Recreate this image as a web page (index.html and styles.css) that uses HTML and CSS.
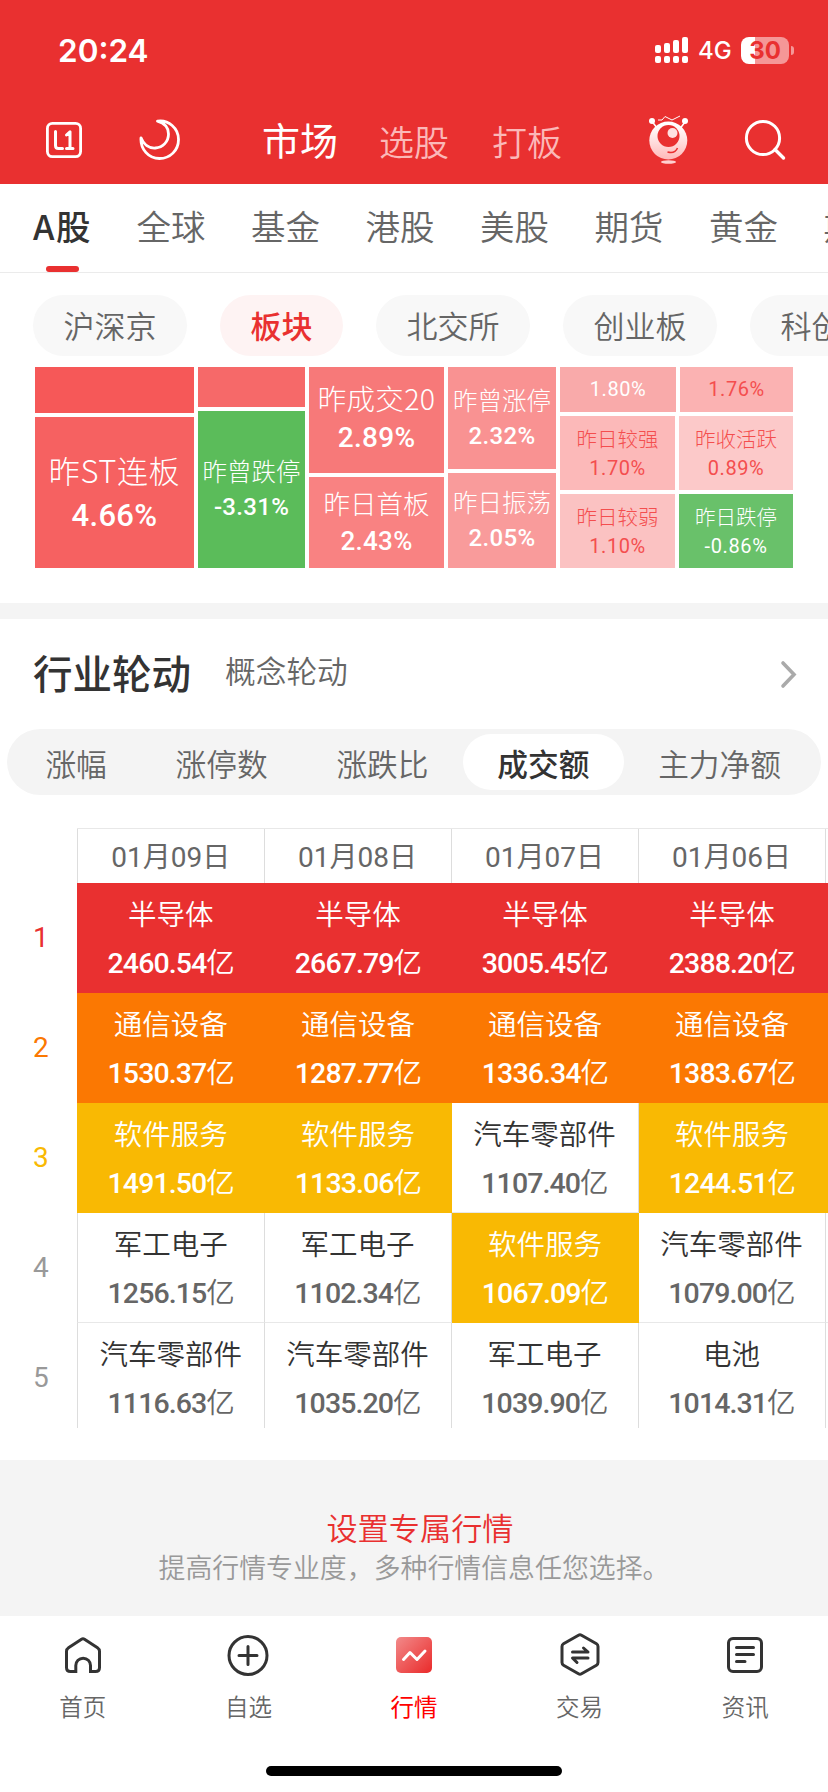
FILE: index.html
```html
<!DOCTYPE html>
<html lang="zh-CN">
<head>
    <meta charset="UTF-8">
    <meta name="viewport" content="width=device-width, initial-scale=1.0">
    <title>行情</title>
    <link rel="stylesheet" href="styles.css">
</head>
<body>
    <header class="top">
        <div class="status">
            <span class="time">20:24</span>
            <svg class="signal" width="34" height="28" viewBox="0 0 34 28" fill="#fff">
                <rect x="0" y="9" width="6" height="8" rx="2"/>
                <rect x="9" y="7" width="6" height="10" rx="2"/>
                <rect x="18" y="4" width="6" height="13" rx="2"/>
                <rect x="27" y="1" width="6" height="16" rx="2"/>
                <rect x="0" y="20" width="6" height="7" rx="2"/>
                <rect x="9" y="20" width="6" height="7" rx="2"/>
                <rect x="18" y="20" width="6" height="7" rx="2"/>
                <rect x="27" y="20" width="6" height="7" rx="2"/>
            </svg>
            <span class="network">4G</span>
            <div class="battery">30</div>
            <div class="battery-tip"></div>
        </div>
        <nav class="nav">
            <svg class="icon-l1" width="36" height="36" viewBox="0 0 36 36" fill="none" stroke="#fff" stroke-width="2.8" stroke-linecap="round" stroke-linejoin="round">
                <rect x="1.4" y="1.4" width="33.2" height="33.2" rx="5"/>
                <path d="M9.5 9.5V23.5Q9.5 26.5 12.5 26.5H16.5M20.5 13L24 9.8V26.5M20.5 26.5H27" stroke-width="3"/>
            </svg>
            <svg class="icon-moon" width="42" height="42" viewBox="0 0 42 42" fill="none" stroke="#fff" stroke-width="2.8" stroke-linejoin="round">
                <path d="M18.5 2.2C29.5 0.6 39.5 9 39.5 20.5C39.5 31.5 31 39.5 20.5 39.5C9.5 39.5 1.2 30 2 18.8C4.500 25.500 10 29.500 16.500 29C24 28.400 29.500 22.500 29.500 15C29.500 9 25.500 4.200 18.500 2.200Z"/>
            </svg>
            <a class="nav-item active">市场</a>
            <a class="nav-item">选股</a>
            <a class="nav-item last">打板</a>
            <svg class="icon-robot" width="42" height="50" viewBox="0 0 42 50">
                <defs>
                    <linearGradient id="robot" x1="0" y1="0" x2="0" y2="1">
                        <stop offset="0.1" stop-color="#fff"/>
                        <stop offset="1" stop-color="#ffb9b9"/>
                    </linearGradient>
                </defs>
                <path d="M4.500 7L9 13M37 7L32.500 13" stroke="#fff" stroke-width="1.500"/>
                <circle cx="4" cy="6" r="3" fill="#fff"/>
                <circle cx="37" cy="6" r="3" fill="#fff"/>
                <path d="M10 5H14L17 1.500L24 5L32 1" fill="none" stroke="#fff" stroke-width="1"/>
                <circle cx="20.300" cy="25.500" r="19" fill="url(#robot)"/>
                <circle cx="20.500" cy="21" r="11" fill="#e93030"/>
                <circle cx="24.500" cy="18" r="5" fill="#ffe0e0"/>
                <path d="M19.500 37Q27 39 29.500 33" fill="none" stroke="#e93030" stroke-width="1.500"/>
                <ellipse cx="20.500" cy="47" rx="7.500" ry="1.700" fill="#ffd0d0"/>
            </svg>
            <svg class="icon-search" width="42" height="42" viewBox="0 0 42 42" fill="none" stroke="#fff" stroke-width="3">
                <circle cx="19" cy="19" r="16.600"/>
                <path d="M31 30.500L39.500 39" stroke-width="3.400" stroke-linecap="round"/>
            </svg>
        </nav>
    </header>

    <nav class="tabs">
        <a class="tab active">A股</a>
        <a class="tab">全球</a>
        <a class="tab">基金</a>
        <a class="tab">港股</a>
        <a class="tab">美股</a>
        <a class="tab">期货</a>
        <a class="tab">黄金</a>
        <a class="tab">期权</a>
    </nav>

    <div class="chips">
        <a class="chip">沪深京</a>
        <a class="chip active">板块</a>
        <a class="chip">北交所</a>
        <a class="chip">创业板</a>
        <a class="chip">科创板</a>
    </div>

    <section class="treemap">
        <div class="col col-1">
            <div class="cell c1"></div>
            <div class="cell c2 xl"><span>昨ST连板</span><b>4.66%</b></div>
        </div>
        <div class="col col-2">
            <div class="cell c3"></div>
            <div class="cell c4 md"><span>昨曾跌停</span><b>-3.31%</b></div>
        </div>
        <div class="col col-3">
            <div class="cell c5 lg"><span>昨成交20</span><b>2.89%</b></div>
            <div class="cell c6 ml"><span>昨日首板</span><b>2.43%</b></div>
        </div>
        <div class="col col-4">
            <div class="cell c7 md"><span>昨曾涨停</span><b>2.32%</b></div>
            <div class="cell c8 md"><span>昨日振荡</span><b>2.05%</b></div>
        </div>
        <div class="col col-5">
            <div class="pair pair-top">
                <div class="cell c9 sm"><b>1.80%</b></div>
                <div class="cell c10 sm"><b>1.76%</b></div>
            </div>
            <div class="pair pair-mid">
                <div class="cell c11 sm"><span>昨日较强</span><b>1.70%</b></div>
                <div class="cell c12 sm"><span>昨收活跃</span><b>0.89%</b></div>
            </div>
            <div class="pair pair-low">
                <div class="cell c13 sm"><span>昨日较弱</span><b>1.10%</b></div>
                <div class="cell c14 sm"><span>昨日跌停</span><b>-0.86%</b></div>
            </div>
        </div>
    </section>

    <section class="rotation">
        <div class="heading">
            <h2>行业轮动</h2>
            <a class="sub">概念轮动</a>
            <svg width="18" height="30" viewBox="0 0 18 30" fill="none" stroke="#aaa" stroke-width="3.600" stroke-linecap="round">
                <path d="M4 4L15 15.500L4 27"/>
            </svg>
        </div>
        <div class="segment">
            <a>涨幅</a>
            <a>涨停数</a>
            <a>涨跌比</a>
            <a class="active">成交额</a>
            <a>主力净额</a>
        </div>
        <div class="board">
            <div class="ranks">
                <span class="r1">1</span>
                <span class="r2">2</span>
                <span class="r3">3</span>
                <span>4</span>
                <span>5</span>
            </div>
            <div class="grid">
                <div class="date">01<i>月</i>09<i>日</i></div>
                <div class="date">01<i>月</i>08<i>日</i></div>
                <div class="date">01<i>月</i>07<i>日</i></div>
                <div class="date">01<i>月</i>06<i>日</i></div>
                <div class="date"></div>

                <div class="item red"><span>半导体</span><b>2460.54<i>亿</i></b></div>
                <div class="item red"><span>半导体</span><b>2667.79<i>亿</i></b></div>
                <div class="item red"><span>半导体</span><b>3005.45<i>亿</i></b></div>
                <div class="item red"><span>半导体</span><b>2388.20<i>亿</i></b></div>
                <div class="item red"></div>

                <div class="item orange"><span>通信设备</span><b>1530.37<i>亿</i></b></div>
                <div class="item orange"><span>通信设备</span><b>1287.77<i>亿</i></b></div>
                <div class="item orange"><span>通信设备</span><b>1336.34<i>亿</i></b></div>
                <div class="item orange"><span>通信设备</span><b>1383.67<i>亿</i></b></div>
                <div class="item orange"></div>

                <div class="item yellow"><span>软件服务</span><b>1491.50<i>亿</i></b></div>
                <div class="item yellow"><span>软件服务</span><b>1133.06<i>亿</i></b></div>
                <div class="item"><span>汽车零部件</span><b>1107.40<i>亿</i></b></div>
                <div class="item yellow"><span>软件服务</span><b>1244.51<i>亿</i></b></div>
                <div class="item yellow"></div>

                <div class="item"><span>军工电子</span><b>1256.15<i>亿</i></b></div>
                <div class="item"><span>军工电子</span><b>1102.34<i>亿</i></b></div>
                <div class="item yellow"><span>软件服务</span><b>1067.09<i>亿</i></b></div>
                <div class="item"><span>汽车零部件</span><b>1079.00<i>亿</i></b></div>
                <div class="item"></div>

                <div class="item"><span>汽车零部件</span><b>1116.63<i>亿</i></b></div>
                <div class="item"><span>汽车零部件</span><b>1035.20<i>亿</i></b></div>
                <div class="item"><span>军工电子</span><b>1039.90<i>亿</i></b></div>
                <div class="item"><span>电池</span><b>1014.31<i>亿</i></b></div>
                <div class="item"></div>
            </div>
        </div>
    </section>

    <section class="promo">
        <a>设置专属行情</a>
        <p>提高行情专业度，多种行情信息任您选择。</p>
    </section>

    <footer class="bottom">
        <nav class="tabbar">
            <a>
                <svg width="44" height="46" viewBox="0 0 44 46" fill="none" stroke="#333" stroke-width="3">
                    <path d="M14.800 38.500H9.500Q5.500 38.500 5.500 34.500V18.500Q5.500 16 7.500 14.700L20.500 6.300Q22 5.300 23.500 6.300L36.500 14.700Q38.500 16 38.500 18.500V34.500Q38.500 38.500 34.500 38.500H29.500V32.500A7.350 7.350 0 0 0 14.800 32.500Z"/>
                </svg>
                <span>首页</span>
            </a>
            <a>
                <svg width="44" height="46" viewBox="0 0 44 46" fill="none" stroke="#333" stroke-width="3" stroke-linecap="round">
                    <circle cx="22" cy="22.500" r="19"/>
                    <path d="M13 22.500H31M22 13.500V31.500"/>
                </svg>
                <span>自选</span>
            </a>
            <a class="active">
                <svg width="44" height="46" viewBox="0 0 44 46">
                    <defs>
                        <linearGradient id="quote" x1="0" y1="0" x2="1" y2="1">
                            <stop offset="0" stop-color="#f28a8a"/>
                            <stop offset="1" stop-color="#ea2a2a"/>
                        </linearGradient>
                    </defs>
                    <rect x="4" y="4" width="36" height="36" rx="5" fill="url(#quote)"/>
                    <path d="M11.500 26.500L18 19.500L25 26.500L33 18" fill="none" stroke="#fff" stroke-width="3" stroke-linecap="round" stroke-linejoin="round"/>
                </svg>
                <span>行情</span>
            </a>
            <a>
                <svg width="44" height="46" viewBox="0 0 44 46" fill="none" stroke="#333" stroke-width="3" stroke-linecap="round" stroke-linejoin="round">
                    <path d="M20.500 2.200Q22 1.300 23.500 2.200L38.500 10.800Q40 11.700 40 13.500V29.500Q40 31.300 38.500 32.200L23.500 40.800Q22 41.700 20.500 40.800L5.500 32.200Q4 31.300 4 29.500V13.500Q4 11.700 5.500 10.800Z"/>
                    <path d="M14.500 19H30L25.500 15M30 25H14.500L19 29.500"/>
                </svg>
                <span>交易</span>
            </a>
            <a>
                <svg width="44" height="46" viewBox="0 0 44 46" fill="none" stroke="#333" stroke-width="3" stroke-linecap="round">
                    <rect x="5.500" y="5.500" width="33" height="33" rx="4.500"/>
                    <path d="M13.500 14.500H30.500M13.500 21.500H30.500M13.500 28.500H22"/>
                </svg>
                <span>资讯</span>
            </a>
        </nav>
        <div class="home-bar"></div>
    </footer>
</body>
</html>
```

FILE: styles.css
```css
* { box-sizing: border-box; }
body {
    margin: 0;
    width: 828px;
    height: 1792px;
    overflow: hidden;
    background: #fff;
    color: #333;
    font-family: "Noto Sans CJK SC", sans-serif;
    font-weight: 350;
    white-space: nowrap;
}
h2, p { margin: 0; }
i { font-style: normal; }
svg { display: block; flex-shrink: 0; }

/* header */
.top { height: 184px; background: #e93030; color: #fff; }
.status {
    display: flex;
    align-items: center;
    height: 100px;
    padding: 0 34px 0 58px;
    font-family: Inter, sans-serif;
}
.time { font-size: 31.500px; font-weight: 600; }
.signal { margin-left: auto; }
.network { width: 34px; margin-left: 9px; font-size: 24px; font-weight: 500; }
.battery {
    width: 48px;
    height: 27px;
    margin-left: 9px;
    border-radius: 8px;
    background: linear-gradient(90deg, #fff 14px, #f59797 14px);
    color: #e93030;
    font-size: 24px;
    font-weight: 700;
    line-height: 27px;
    text-align: center;
}
.battery-tip { width: 3px; height: 9px; margin-left: 2px; border-radius: 0 4px 4px 0; background: #f59797; }
.nav { display: flex; align-items: center; height: 80px; padding-left: 46px; }
.icon-moon { margin-left: 57px; }
.nav-item { width: 70px; font-size: 35px; color: #fbb8b8; margin-right: 43px; }
.nav-item.active { width: 76px; margin: -4px 41px 0 81px; font-size: 38px; font-weight: 400; color: #fff; }
.nav-item.last { margin-right: 86px; }
.icon-search { margin-left: 54px; }

/* market tabs */
.tabs {
    display: flex;
    gap: 45.500px;
    height: 89px;
    padding-left: 33px;
    overflow: hidden;
    border-bottom: 1px solid #ebebeb;
}
.tab { flex: none; width: 69px; font-size: 34.500px; line-height: 82px; color: #666; }
.tab.active { display: flex; flex-direction: column; width: 58px; font-weight: 500; letter-spacing: 1.500px; color: #333; }
.tab.active::after {
    content: "";
    width: 33px;
    height: 6px;
    margin-left: 13px;
    border-radius: 3px;
    background: #e93030;
}

.chips { display: flex; gap: 33px; height: 94px; padding: 22px 0 0 33px; overflow: hidden; }
.chip {
    flex: none;
    height: 61px;
    padding: 0 30.500px;
    border-radius: 31px;
    background: #f8f8f8;
    color: #666;
    font-size: 31px;
    line-height: 59px;
}
.chip.active { background: #fef3f3; color: #e93030; font-weight: 500; }

/* heat map */
.treemap { display: flex; gap: 4px; width: 758px; height: 201px; margin: 0 0 35px 35px; }
.col { display: flex; flex-direction: column; gap: 4px; }
.col-1 { width: 159px; }
.col-2 { width: 107px; }
.col-3 { width: 135px; }
.col-4 { width: 108px; }
.col-5 { width: 233px; }
.pair { display: flex; gap: 4px; }
.pair-top { height: 45px; }
.pair-mid { height: 75px; }
.pair-low { height: 74px; }
.cell {
    display: flex;
    flex-direction: column;
    align-items: center;
    justify-content: center;
    padding-bottom: 1px;
    color: #fff;
}
.cell span { font-weight: 300; }
.cell b { font-family: Roboto, sans-serif; font-weight: 500; letter-spacing: 0.300px; }
.c1 { height: 46px; background: #f65858; }
.c2 { height: 151px; background: #f66161; }
.c3 { height: 40px; background: #f66969; }
.c4 { height: 157px; background: #5bbc5a; }
.c5 { height: 106px; background: #f77979; }
.c6 { height: 91px; background: #f98282; }
.c7 { height: 102px; background: #f99292; }
.c8 { height: 95px; background: #f99b9b; }
.pair .cell { width: 116px; }
.pair .cell + .cell { width: 113px; }
.pair-mid .cell, .pair-low .cell { width: 115px; }
.pair-mid .cell + .cell, .pair-low .cell + .cell { width: 114px; }
.c9 { background: #f9aaaa; }
.c10 { background: #fbb2b2; color: #f44e4e; }
.c11 { background: #fcb9b9; color: #f44e4e; }
.c12 { background: #fcc9c9; color: #f44e4e; }
.c13 { background: #fbc2c2; color: #f44e4e; }
.c14 { background: #69c16a; }
.xl { padding: 0; font-size: 31px; line-height: 46px; }
.xl span { letter-spacing: 0.600px; }
.xl b { font-size: 31px; }
.lg { padding-bottom: 2px; font-size: 28.500px; line-height: 40px; }
.lg span { margin-top: -3px; letter-spacing: 0.300px; }
.lg b { font-size: 28px; }
.ml { font-size: 26.500px; line-height: 38px; }
.ml b { font-size: 26px; }
.md { font-size: 24.500px; line-height: 36px; }
.md b { font-size: 24px; }
.sm { padding: 0; font-size: 20.500px; line-height: 30px; }
.sm span { margin-top: -1px; }
.sm b { font-size: 20px; font-weight: 400; letter-spacing: 0.600px; }

/* industry rotation */
.rotation { border-top: 16px solid #f4f4f4; }
.heading { display: flex; align-items: center; height: 110px; padding: 0 31px 0 33px; }
.heading h2 { margin-top: -6px; font-size: 39.500px; font-weight: 500; }
.heading .sub { margin: -9px 0 0 34px; font-size: 30.700px; color: #666; }
.heading svg { margin-left: auto; }
.segment {
    display: flex;
    width: 814px;
    height: 66px;
    margin-left: 7px;
    padding: 5px 4px;
    border-radius: 33px;
    background: #f4f4f4;
}
.segment a { padding: 0 34.400px; border-radius: 29px; font-size: 30.700px; line-height: 57px; color: #666; }
.segment .active { background: #fff; color: #333; font-weight: 500; }
.board { display: flex; height: 600px; margin: 33px 0 32px; overflow: hidden; }
.ranks {
    display: grid;
    grid-auto-rows: 110px;
    flex: none;
    width: 77px;
    padding-top: 55px;
    font: 400 28px Roboto, sans-serif;
    line-height: 110px;
    color: #999;
}
.ranks span { padding-left: 33px; }
.ranks .r1 { color: #e93030; }
.ranks .r2 { color: #fb7802; }
.ranks .r3 { color: #f9b903; }
.grid {
    display: grid;
    grid-template-columns: 187.500px repeat(4, 187px);
    grid-template-rows: 54px repeat(5, 110px);
    flex: none;
    border-top: 1px solid #e8e8e8;
}
.date, .item { border-right: 1px solid #ddd; text-align: center; }
.date:nth-child(5n+1), .item:nth-child(5n+1) { border-left: 1px solid #ddd; }
.date { font: 400 28px Roboto, sans-serif; line-height: 52px; color: #666; }
.date i { font-family: "Noto Sans CJK SC", sans-serif; font-weight: 400; }
.item { display: flex; flex-direction: column; padding-top: 5px; border-bottom: 1px solid #e8e8e8; font-size: 28.500px; line-height: 49px; }
.item b { margin-top: -1px; font-family: Roboto, sans-serif; font-size: 28.500px; font-weight: 500; letter-spacing: -0.900px; color: #666; }
.item i { font-family: "Noto Sans CJK SC", sans-serif; font-weight: 350; }
.grid .red, .grid .orange, .grid .yellow { border: none; color: #fff; }
.grid .red b, .grid .orange b, .grid .yellow b { color: #fff; }
.red { background: #e93030; }
.orange { background: #fb7802; }
.yellow { background: #f9b903; }

.promo { height: 156px; padding-top: 45px; background: #f4f4f4; text-align: center; }
.promo a { display: block; padding-left: 12px; font-size: 31.200px; line-height: 44px; color: #e93030; }
.promo p { font-size: 26.900px; line-height: 36px; color: #999; }

/* bottom bar */
.tabbar { display: flex; height: 150px; padding-top: 17px; }
.tabbar a {
    display: flex;
    flex: 1;
    flex-direction: column;
    align-items: center;
    gap: 8px;
    font-size: 23.500px;
    line-height: 38px;
    color: #666;
}
.tabbar .active { font-weight: 400; color: #f00; }
.home-bar { width: 296px; height: 10px; margin: 0 auto; border-radius: 5px; background: #000; }
```
